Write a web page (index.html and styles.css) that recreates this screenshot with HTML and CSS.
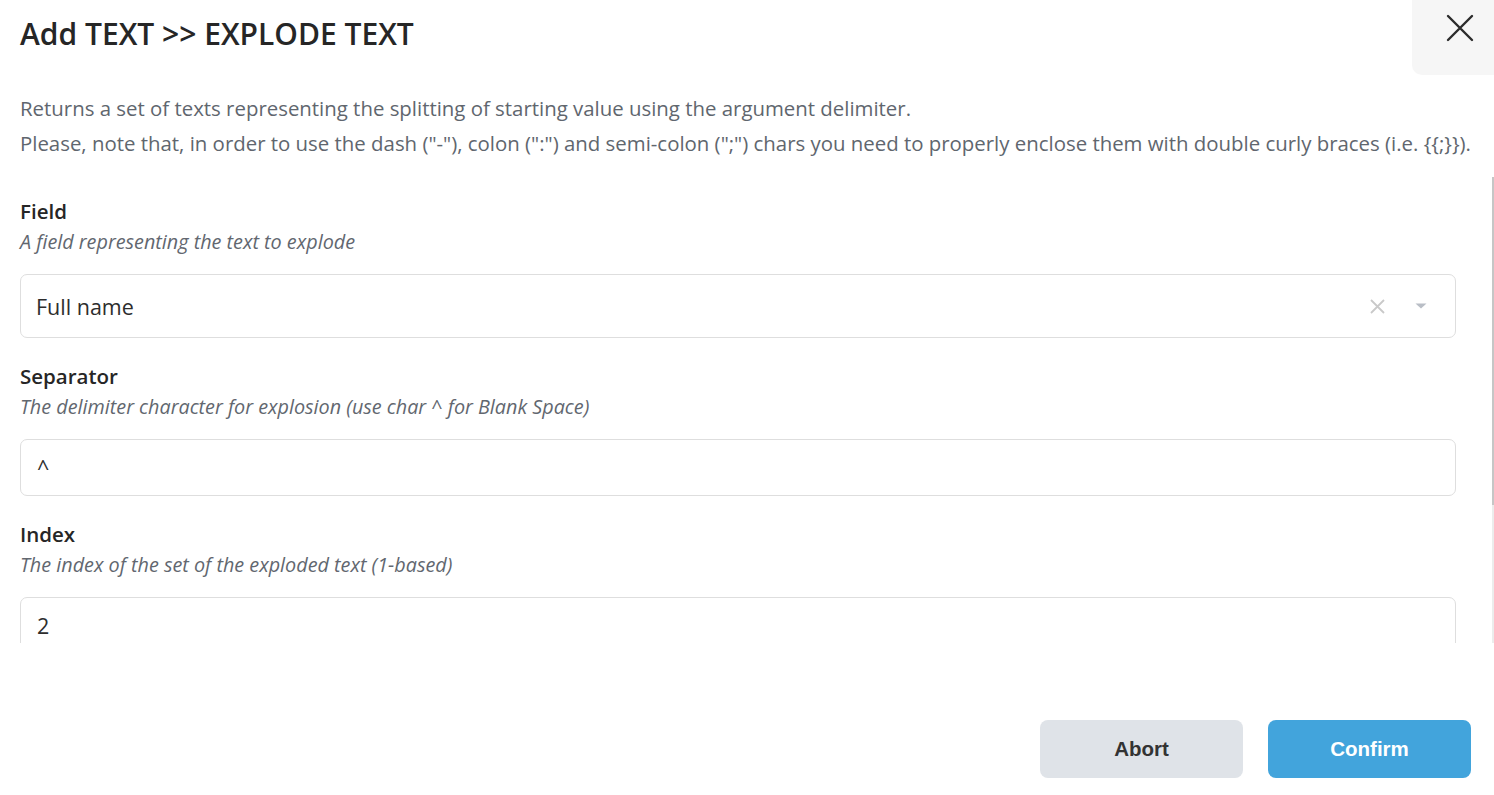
FILE: index.html
```html
<!DOCTYPE html>
<html lang="en">
<head>
<meta charset="utf-8">
<title>Add TEXT &gt;&gt; EXPLODE TEXT</title>
<link rel="stylesheet" href="styles.css">
</head>
<body>
<div class="modal">
  <header class="modal-header">
    <h1 class="modal-title">Add TEXT &gt;&gt; EXPLODE TEXT</h1>
    <button class="close-btn" aria-label="Close">
      <svg width="28" height="28" viewBox="0 0 28 28"><path d="M2 2 L26 26 M26 2 L2 26" stroke="#2b2b2b" stroke-width="2.4" stroke-linecap="round" fill="none"/></svg>
    </button>
  </header>
  <div class="description">
    <p>Returns a set of texts representing the splitting of starting value using the argument delimiter.</p>
    <p>Please, note that, in order to use the dash ("-"), colon (":") and semi-colon (";") chars you need to properly enclose them with double curly braces (i.e. {{;}}).</p>
  </div>
  <div class="scroll-area">
    <div class="form">
      <div class="field">
        <div class="label">Field</div>
        <div class="hint">A field representing the text to explode</div>
        <div class="select">
          <span class="value">Full name</span>
          <span class="select-icons">
            <svg class="clear" width="17" height="17" viewBox="0 0 17 17"><path d="M2 2 L15 15 M15 2 L2 15" stroke="#c9c9c9" stroke-width="1.8" fill="none"/></svg>
            <svg class="caret" width="12" height="8" viewBox="0 0 12 8"><path d="M0.5 1.5 L11.5 1.5 L6 6.5 Z" fill="#b9bec6"/></svg>
          </span>
        </div>
      </div>
      <div class="field">
        <div class="label">Separator</div>
        <div class="hint">The delimiter character for explosion (use char ^ for Blank Space)</div>
        <div class="input">^</div>
      </div>
      <div class="field">
        <div class="label">Index</div>
        <div class="hint">The index of the set of the exploded text (1-based)</div>
        <div class="input">2</div>
      </div>
    </div>
    <div class="scrollbar"><div class="thumb"></div></div>
  </div>
  <footer class="modal-footer">
    <button class="btn btn-abort">Abort</button>
    <button class="btn btn-confirm">Confirm</button>
  </footer>
</div>
</body>
</html>
```
FILE: styles.css
```css
* { box-sizing: border-box; }
html, body { margin: 0; padding: 0; background: #fff; }
body {
  font-family: "Open Sans", "Noto Sans", sans-serif;
  width: 1494px;
  height: 795px;
  overflow: hidden;
}
.modal { display: flex; flex-direction: column; height: 795px; }

.modal-header {
  display: flex;
  justify-content: space-between;
  align-items: flex-start;
  height: 75px;
}
.modal-title {
  margin: 0;
  padding: 15px 0 0 20px;
  font-size: 30px;
  line-height: 38px;
  font-weight: 600;
  color: #262626;
}
.close-btn {
  width: 82px;
  height: 75px;
  border: none;
  background: #f6f6f6;
  border-bottom-left-radius: 10px;
  display: flex;
  align-items: center;
  justify-content: center;
  padding: 0 0 20px 14px;
  margin: 0;
}

.description {
  padding: 0 20px 0 20px;
  color: #60666e;
  font-size: 20.4px;
  line-height: 35px;
  margin-top: 16px;
}
.description p { margin: 0; }

.scroll-area {
  display: flex;
  margin-top: 16px;
  height: 466px;
  overflow: hidden;
}
.form {
  flex: 1;
  padding: 22px 36px 0 20px;
}
.scrollbar {
  width: 2px;
  background: #ececec;
  display: flex;
  flex-direction: column;
}
.thumb { height: 328px; background: #c6c6c6; }

.field { margin-bottom: 26px; }
.label {
  font-size: 20.5px;
  line-height: 24px;
  font-weight: 600;
  color: #262626;
}
.hint {
  margin-top: 7px;
  font-size: 19.8px;
  line-height: 24px;
  font-style: italic;
  color: #62676f;
}
.select, .input {
  margin-top: 20px;
  border: 1px solid #dedede;
  border-radius: 7px;
  display: flex;
  align-items: center;
  color: #2d2d2d;
  font-size: 21.5px;
}
.select {
  height: 64px;
  padding: 0 28px 0 15px;
  justify-content: space-between;
}
.select-icons { display: flex; align-items: center; gap: 29px; }
.input {
  height: 57px;
  padding: 0 16px;
}

.modal-footer {
  flex: 1;
  display: flex;
  justify-content: flex-end;
  align-items: flex-start;
  gap: 25px;
  padding: 77px 23px 0 0;
}
.btn {
  width: 203px;
  height: 58px;
  border: none;
  border-radius: 8px;
  font-family: "Liberation Sans", Arial, sans-serif;
  font-weight: 700;
  font-size: 20.5px;
}
.btn-abort { background: #dfe3e8; color: #333; }
.btn-confirm { background: #42a4dc; color: #fff; }
```
